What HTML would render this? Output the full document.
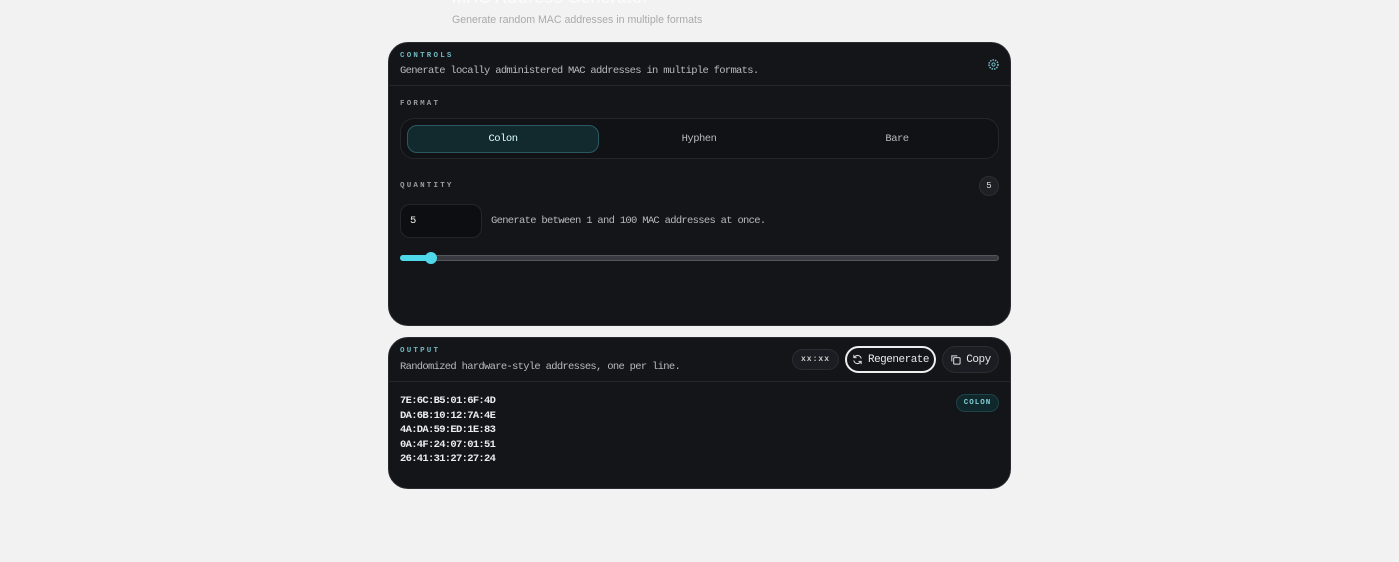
<!DOCTYPE html>
<html><head><style>
*{box-sizing:border-box;margin:0;padding:0}
body{width:1399px;height:562px;background:#f2f2f2;font-family:"Liberation Mono",monospace;position:relative;overflow:hidden}
.a{position:absolute}
.card{position:absolute;left:388px;width:623px;background:#141519;border-radius:20px;border:1px solid #2a2b30}
.lbl{position:absolute;left:11px;font-size:7.5px;font-weight:bold;letter-spacing:2.2px;color:#6fb8c0}
.lbl2{color:#9a9ca2}
.desc{position:absolute;left:11px;font-size:10.5px;letter-spacing:-0.7px;color:#b8b9bd}
.div{position:absolute;left:0;right:0;height:1px;background:#26272c}
.btn{position:absolute;border-radius:14px;background:#1c1d22;border:1px solid #2c2d33;color:#e8e8ea;font-size:11px;letter-spacing:-0.5px;display:flex;align-items:center;justify-content:center}
.mac{font-size:10.5px;letter-spacing:-0.7px;font-weight:bold;color:#ececee;line-height:14.6px}
.seg{position:absolute;top:82px;height:28px;color:#b8b9bd;font-size:10.5px;letter-spacing:-0.5px;display:flex;align-items:center;justify-content:center}
</style></head><body>
<div class="a" style="left:452px;top:-12px;font-family:'Liberation Sans',sans-serif;font-size:17px;font-weight:bold;color:#fafafa">MAC Address Generator</div>
<div class="a" style="left:452px;top:14px;font-family:'Liberation Sans',sans-serif;font-size:10.6px;color:#aaa">Generate random MAC addresses in multiple formats</div>
<div class="a" style="left:946px;top:-6px;font-size:8px;color:#ddd">NET &nbsp; &nbsp; ESC</div>

<div class="card" style="top:42px;height:284px">
  <div class="lbl" style="top:9px">CONTROLS</div>
  <div class="desc" style="top:22px">Generate locally administered MAC addresses in multiple formats.</div>
  <svg class="a" style="left:598px;top:15px" width="13" height="13" viewBox="0 0 13 13"><circle cx="6.5" cy="6.5" r="4.5" fill="none" stroke="#6fb8c0" stroke-width="1.6" stroke-dasharray="1.5 1"/><circle cx="6.5" cy="6.5" r="1.6" fill="none" stroke="#6fb8c0" stroke-width="1"/></svg>
  <div class="div" style="top:42px"></div>
  <div class="lbl lbl2" style="top:57px">FORMAT</div>
  <div class="a" style="left:11px;top:75px;width:599px;height:41px;border:1px solid #25262b;border-radius:14px;background:#111216"></div>
  <div class="seg" style="left:18px;width:192px;border:1px solid #2a5a60;border-radius:10px;background:#12292e;color:#dff">Colon</div>
  <div class="seg" style="left:211px;width:198px">Hyphen</div>
  <div class="seg" style="left:409px;width:198px">Bare</div>
  <div class="lbl lbl2" style="top:139px">QUANTITY</div>
  <div class="a" style="left:590px;top:133px;width:20px;height:20px;border-radius:50%;background:#1f2025;border:1px solid #2d2e34;color:#ddd;font-size:9px;display:flex;align-items:center;justify-content:center">5</div>
  <div class="a" style="left:11px;top:161px;width:82px;height:34px;border-radius:10px;background:#0d0e11;border:1px solid #25262b;color:#eee;font-size:10.5px;padding:10px 0 0 9px">5</div>
  <div class="desc" style="left:102px;top:172px">Generate between 1 and 100 MAC addresses at once.</div>
  <div class="a" style="left:11px;top:212px;width:599px;height:6px;border-radius:3px;background:#3a3b40;border:1px solid #55565b"></div>
  <div class="a" style="left:11px;top:212px;width:32px;height:6px;border-radius:3px;background:#4fd8ea"></div>
  <div class="a" style="left:36px;top:209px;width:12px;height:12px;border-radius:50%;background:#4fd8ea"></div>
</div>

<div class="card" style="top:337px;height:152px">
  <div class="lbl" style="top:9px">OUTPUT</div>
  <div class="desc" style="top:23px">Randomized hardware-style addresses, one per line.</div>
  <div class="btn" style="left:403px;top:11px;width:47px;height:21px;font-size:8px;font-weight:bold;letter-spacing:1px;color:#ccc">xx:xx</div>
  <div class="btn" style="left:456px;top:8px;width:91px;height:27px;border:2px solid #eee;background:#141519"><svg width="11" height="11" viewBox="0 0 12 12" style="margin-right:5px"><path d="M10 5A4 4 0 0 0 3 3L2 4M2 7a4 4 0 0 0 7 2l1-1M2 1v3h3M10 11V8H7" fill="none" stroke="#ddd" stroke-width="1.1"/></svg>Regenerate</div>
  <div class="btn" style="left:553px;top:8px;width:57px;height:27px"><svg width="11" height="11" viewBox="0 0 12 12" style="margin-right:5px"><rect x="4" y="4" width="7" height="7" rx="1" fill="none" stroke="#ddd" stroke-width="1.1"/><path d="M2 8V2h6" fill="none" stroke="#ddd" stroke-width="1.1"/></svg>Copy</div>
  <div class="div" style="top:43px"></div>
  <div class="a" style="left:567px;top:56px;width:43px;height:18px;border-radius:9px;background:#10282c;border:1px solid #1e4248;color:#7fd0d8;font-size:7.5px;font-weight:bold;letter-spacing:1px;display:flex;align-items:center;justify-content:center">COLON</div>
  <div class="a mac" style="left:11px;top:56px">7E:6C:B5:01:6F:4D<br>DA:6B:10:12:7A:4E<br>4A:DA:59:ED:1E:83<br>0A:4F:24:07:01:51<br>26:41:31:27:27:24</div>
</div>
</body></html>
